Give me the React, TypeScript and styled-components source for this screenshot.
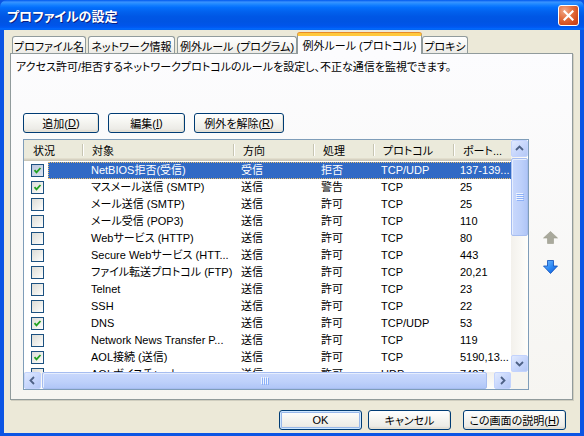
import React from 'react';
import styled, { createGlobalStyle, css } from 'styled-components';

const GlobalStyle = createGlobalStyle`
  * { box-sizing: border-box; }
  html, body {
    margin: 0;
    padding: 0;
    width: 584px;
    height: 436px;
    overflow: hidden;
    background: #ECE9D8;
  }
  body {
    font-family: "Liberation Sans", "Noto Sans CJK JP", sans-serif;
    font-size: 11px;
    color: #000;
    font-feature-settings: "palt";
  }
`;

type Rule = {
  on: boolean;
  name: string;
  dir: string;
  action: string;
  proto: string;
  port: string;
};

const rules: Rule[] = [
  { on: true, name: 'NetBIOS拒否(受信)', dir: '受信', action: '拒否', proto: 'TCP/UDP', port: '137-139...' },
  { on: true, name: 'マスメール送信 (SMTP)', dir: '送信', action: '警告', proto: 'TCP', port: '25' },
  { on: false, name: 'メール送信 (SMTP)', dir: '送信', action: '許可', proto: 'TCP', port: '25' },
  { on: false, name: 'メール受信 (POP3)', dir: '送信', action: '許可', proto: 'TCP', port: '110' },
  { on: false, name: 'Webサービス (HTTP)', dir: '送信', action: '許可', proto: 'TCP', port: '80' },
  { on: false, name: 'Secure Webサービス (HTT...', dir: '送信', action: '許可', proto: 'TCP', port: '443' },
  { on: false, name: 'ファイル転送プロトコル (FTP)', dir: '送信', action: '許可', proto: 'TCP', port: '20,21' },
  { on: false, name: 'Telnet', dir: '送信', action: '許可', proto: 'TCP', port: '23' },
  { on: false, name: 'SSH', dir: '送信', action: '許可', proto: 'TCP', port: '22' },
  { on: true, name: 'DNS', dir: '送信', action: '許可', proto: 'TCP/UDP', port: '53' },
  { on: false, name: 'Network News Transfer P...', dir: '送信', action: '許可', proto: 'TCP', port: '119' },
  { on: true, name: 'AOL接続 (送信)', dir: '送信', action: '許可', proto: 'TCP', port: '5190,13...' },
  { on: false, name: 'AOLボイスチャット', dir: '送信', action: '許可', proto: 'UDP', port: '7427' },
];

const columns = [
  { label: '状況', width: 59 },
  { label: '対象', width: 151 },
  { label: '方向', width: 80 },
  { label: '処理', width: 60 },
  { label: 'プロトコル', width: 80 },
  { label: 'ポート...', width: 80 },
];

const tabs = [
  { label: 'プロファイル名', width: 74 },
  { label: 'ネットワーク情報', width: 87 },
  { label: '例外ルール (プログラム)', width: 120 },
  { label: '例外ルール (プロトコル)', width: 125, active: true },
  { label: 'プロキシ', width: 46 },
];

const Window = styled.div`
  width: 584px;
  height: 436px;
  display: flex;
  flex-direction: column;
  background: #0A54E2;
`;

const TitleBar = styled.div`
  flex: none;
  height: 30px;
  display: flex;
  align-items: center;
  justify-content: space-between;
  padding: 0 5px 0 7px;
  border-radius: 7px 7px 0 0;
  background: linear-gradient(
    to bottom,
    #0058EE 0%,
    #3A93FF 7%,
    #288EFF 11%,
    #127DFF 18%,
    #036FFC 25%,
    #0262EE 38%,
    #0057E5 55%,
    #0054E3 72%,
    #0055EB 86%,
    #005BF5 92%,
    #026AFE 96%,
    #0062EF 100%
  );
`;

const TitleText = styled.span`
  font-family: "Noto Sans CJK JP", sans-serif;
  font-size: 13px;
  font-weight: bold;
  color: #fff;
  text-shadow: 1px 1px 0 #0A1E80;
`;

const CloseButton = styled.div`
  width: 21px;
  height: 21px;
  border: 1px solid #fff;
  border-radius: 3px;
  display: flex;
  align-items: center;
  justify-content: center;
  background: radial-gradient(circle at 30% 25%, #F2A989 0%, #E3703F 40%, #D24B1E 75%, #C0391A 100%);
`;

const Body = styled.div`
  flex: 1;
  display: flex;
  flex-direction: column;
  background: #ECE9D8;
  border-style: solid;
  border-color: #0B55E4;
  border-width: 0 4px 3px;
  padding: 3px 7px 0 6px;
`;

const TabRow = styled.div`
  flex: none;
  height: 20px;
  display: flex;
  align-items: flex-end;
  gap: 2px;
  padding-left: 2px;
`;

const Tab = styled.div<{ $w: number; $active?: boolean }>`
  flex: none;
  width: ${({ $w }) => $w}px;
  height: 17px;
  display: flex;
  align-items: center;
  justify-content: center;
  white-space: nowrap;
  border: 1px solid #919B9C;
  border-bottom: none;
  border-radius: 3px 3px 0 0;
  background: linear-gradient(to bottom, #FFFFFF 0%, #F7F7F4 50%, #ECEBE6 100%);
  padding-top: 1px;

  ${({ $active }) =>
    $active &&
    css`
      position: relative;
      z-index: 1;
      height: 21px;
      margin: 0 -2px -1px;
      padding-top: 0;
      border-top: 3px solid #FFC83C;
      box-shadow: 0 -1px 0 #E68B2C;
      background: #FCFCFE;
    `}
`;

const Panel = styled.div`
  flex: none;
  height: 347px;
  display: flex;
  flex-direction: column;
  border: 1px solid #919B9C;
  box-shadow: 1px 1px 0 #D0CEBF;
  background: linear-gradient(to bottom, #FCFCFE 0%, #F6F5F1 100%);
  padding: 5px 0 9px 0;
`;

const Description = styled.div`
  padding-left: 5px;
  line-height: 16px;
  white-space: nowrap;
`;

const ButtonRow = styled.div`
  display: flex;
  gap: 9px;
  margin-top: 38px;
  padding-left: 12px;
`;

const Button = styled.div<{ $w: number; $default?: boolean }>`
  flex: none;
  width: ${({ $w }) => $w}px;
  height: 20px;
  display: flex;
  align-items: center;
  justify-content: center;
  white-space: nowrap;
  border: 1px solid #003C74;
  border-radius: 3px;
  background: linear-gradient(to bottom, #FFFFFF 0%, #F6F6F2 40%, #ECEBE6 85%, #D6D0C5 100%);
  box-shadow: inset -1px -1px 0 #E3E0D5;

  ${({ $default }) =>
    $default &&
    css`
      box-shadow: inset 0 0 0 1px #CEE7FF, inset 0 0 0 2px #98B8EA;
    `}
`;

const ListArea = styled.div`
  flex: 1;
  display: flex;
  margin-top: 6px;
  padding-left: 12px;
  min-height: 0;
`;

const ListView = styled.div`
  flex: none;
  width: 506px;
  display: grid;
  grid-template-columns: 1fr 17px;
  grid-template-rows: 1fr 17px;
  border: 1px solid #7F9DB9;
  background: #fff;
  overflow: hidden;
`;

const ListContent = styled.div`
  overflow: hidden;
  min-width: 0;
  min-height: 0;
`;

const HeaderRow = styled.div`
  display: flex;
  height: 21px;
  background: #EBEADB;
  box-shadow: inset 0 -1px 0 #CBC7B8, inset 0 -2px 0 #D6D2C2, inset 0 -3px 0 #E2DECD;
`;

const HeaderCell = styled.div<{ $w: number }>`
  flex: none;
  position: relative;
  width: ${({ $w }) => $w}px;
  padding: 0 0 2px 9px;
  display: flex;
  align-items: center;
  white-space: nowrap;

  &::after {
    content: '';
    position: absolute;
    right: 0;
    top: 4px;
    bottom: 5px;
    width: 1px;
    background: #C7C5B2;
    box-shadow: 1px 0 0 #fff;
  }
`;

const Rows = styled.div`
  padding-top: 1px;
`;

const Row = styled.div`
  display: flex;
  height: 17px;
`;

const CheckSlot = styled.div`
  flex: none;
  width: 24px;
  display: flex;
  align-items: center;
  padding-left: 7px;
`;

const Check = styled.div<{ $sel?: boolean }>`
  width: 13px;
  height: 13px;
  border: 1px solid #1C5180;
  display: flex;
  align-items: center;
  justify-content: center;
  background: ${({ $sel }) =>
    $sel
      ? 'linear-gradient(135deg, #B9C6DE 0%, #DCE3F0 100%)'
      : 'linear-gradient(135deg, #DCDCD7 0%, #F0F0EC 60%, #FFFFFF 100%)'};
`;

const RowBand = styled.div<{ $sel?: boolean }>`
  flex: 1;
  display: flex;
  align-items: center;
  line-height: 17px;
  white-space: nowrap;
  ${({ $sel }) =>
    $sel &&
    css`
      background: #316AC5;
      color: #fff;
      outline: 1px dotted #E8C070;
      outline-offset: -1px;
    `}
`;

const Cell = styled.div<{ $w: number; $pad?: number }>`
  flex: none;
  width: ${({ $w }) => $w}px;
  padding-left: ${({ $pad }) => $pad ?? 7}px;
  overflow: hidden;
  white-space: nowrap;
`;

const VScroll = styled.div`
  display: flex;
  flex-direction: column;
  background: linear-gradient(to right, #F3F1EC 0%, #FEFEFB 100%);
`;

const HScroll = styled.div`
  display: flex;
  background: linear-gradient(to bottom, #F3F1EC 0%, #FEFEFB 100%);
`;

const Corner = styled.div`
  background: #F5F4EF;
`;

const ScrollButton = styled.div`
  flex: none;
  width: 17px;
  height: 17px;
  display: flex;
  align-items: center;
  justify-content: center;
  border: 1px solid #C3D3FD;
  border-radius: 2px;
  background: linear-gradient(135deg, #E1EAFE 0%, #C8D7FC 50%, #B4C8F6 100%);
`;

const Track = styled.div<{ $dir: 'v' | 'h' }>`
  flex: 1;
  display: flex;
  flex-direction: ${({ $dir }) => ($dir === 'v' ? 'column' : 'row')};
`;

const Thumb = styled.div<{ $dir: 'v' | 'h'; $size: number }>`
  flex: none;
  display: flex;
  align-items: center;
  justify-content: center;
  border: 1px solid #A6BDF0;
  border-radius: 2px;
  box-shadow: inset 1px 1px 0 #E6EEFE;
  ${({ $dir, $size }) =>
    $dir === 'v'
      ? css`
          width: 17px;
          height: ${$size}px;
          margin-top: 1px;
          background: linear-gradient(to right, #C9D8FC 0%, #BDD0FA 60%, #B0C6F7 100%);
        `
      : css`
          height: 17px;
          width: ${$size}px;
          margin-left: 1px;
          background: linear-gradient(to bottom, #C9D8FC 0%, #BDD0FA 60%, #B0C6F7 100%);
        `}
`;

const OrderColumn = styled.div`
  flex: 1;
  display: flex;
  flex-direction: column;
  align-items: center;
  gap: 14px;
  padding-top: 90px;
`;

const OrderButton = styled.div`
  width: 18px;
  height: 16px;
  display: flex;
  align-items: center;
  justify-content: center;
`;

const Footer = styled.div`
  flex: none;
  display: flex;
  justify-content: flex-end;
  padding: 10px 7px 0 0;
`;

const FooterButton = styled(Button)<{ $gap: number }>`
  margin-left: ${({ $gap }) => $gap}px;
`;

const Chevron = ({ dir }: { dir: 'up' | 'down' | 'left' | 'right' }) => {
  const pts = {
    up: '1,6 4.5,2.5 8,6',
    down: '1,3 4.5,6.5 8,3',
    left: '6,1 2.5,4.5 6,8',
    right: '3,1 6.5,4.5 3,8',
  }[dir];
  return (
    <svg width="9" height="9" viewBox="0 0 9 9">
      <polyline points={pts} fill="none" stroke="#4D6185" strokeWidth="1.8" />
    </svg>
  );
};

const Grip = ({ dir }: { dir: 'v' | 'h' }) =>
  dir === 'v' ? (
    <svg width="8" height="8" viewBox="0 0 8 8">
      {[0, 2, 4, 6].map((y) => (
        <g key={y}>
          <rect x="0" y={y} width="7" height="1" fill="#EEF4FE" />
          <rect x="1" y={y + 1} width="7" height="1" fill="#8CB0F8" />
        </g>
      ))}
    </svg>
  ) : (
    <svg width="8" height="8" viewBox="0 0 8 8">
      {[0, 2, 4, 6].map((x) => (
        <g key={x}>
          <rect x={x} y="0" width="1" height="7" fill="#EEF4FE" />
          <rect x={x + 1} y="1" width="1" height="7" fill="#8CB0F8" />
        </g>
      ))}
    </svg>
  );

const CheckMark = () => (
  <svg width="9" height="9" viewBox="0 0 9 9">
    <polyline points="1.5,4.2 3.5,6.4 7.5,2" fill="none" stroke="#21A121" strokeWidth="1.8" />
  </svg>
);

export default function App() {
  return (
    <>
      <GlobalStyle />
      <Window>
        <TitleBar>
          <TitleText>プロファイルの設定</TitleText>
          <CloseButton>
            <svg width="11" height="11" viewBox="0 0 11 11">
              <path d="M1.5 1.5 L9.5 9.5 M9.5 1.5 L1.5 9.5" stroke="#fff" strokeWidth="2.2" strokeLinecap="square" />
            </svg>
          </CloseButton>
        </TitleBar>
        <Body>
          <TabRow>
            {tabs.map((t) => (
              <Tab key={t.label} $w={t.width} $active={t.active}>
                {t.label}
              </Tab>
            ))}
          </TabRow>
          <Panel>
            <Description>アクセス許可/拒否するネットワークプロトコルのルールを設定し、不正な通信を監視できます。</Description>
            <ButtonRow>
              <Button $w={76}>
                追加(<u>D</u>)
              </Button>
              <Button $w={77}>
                編集(<u>I</u>)
              </Button>
              <Button $w={90}>
                例外を解除(<u>R</u>)
              </Button>
            </ButtonRow>
            <ListArea>
              <ListView>
                <ListContent>
                  <HeaderRow>
                    {columns.map((c) => (
                      <HeaderCell key={c.label} $w={c.width}>
                        {c.label}
                      </HeaderCell>
                    ))}
                  </HeaderRow>
                  <Rows>
                    {rules.map((r, i) => {
                      const sel = i === 0;
                      return (
                        <Row key={r.name}>
                          <CheckSlot>
                            <Check $sel={sel}>{r.on && <CheckMark />}</Check>
                          </CheckSlot>
                          <RowBand $sel={sel}>
                            <Cell $w={columns[0].width - 24} />
                            <Cell $w={columns[1].width} $pad={8}>
                              {r.name}
                            </Cell>
                            <Cell $w={columns[2].width}>{r.dir}</Cell>
                            <Cell $w={columns[3].width}>{r.action}</Cell>
                            <Cell $w={columns[4].width}>{r.proto}</Cell>
                            <Cell $w={columns[5].width} $pad={6}>
                              {r.port}
                            </Cell>
                          </RowBand>
                        </Row>
                      );
                    })}
                  </Rows>
                </ListContent>
                <VScroll>
                  <ScrollButton>
                    <Chevron dir="up" />
                  </ScrollButton>
                  <Track $dir="v">
                    <Thumb $dir="v" $size={78}>
                      <Grip dir="v" />
                    </Thumb>
                  </Track>
                  <ScrollButton>
                    <Chevron dir="down" />
                  </ScrollButton>
                </VScroll>
                <HScroll>
                  <ScrollButton>
                    <Chevron dir="left" />
                  </ScrollButton>
                  <Track $dir="h">
                    <Thumb $dir="h" $size={445}>
                      <Grip dir="h" />
                    </Thumb>
                  </Track>
                  <ScrollButton>
                    <Chevron dir="right" />
                  </ScrollButton>
                </HScroll>
                <Corner />
              </ListView>
              <OrderColumn>
                <OrderButton>
                  <svg width="15" height="13" viewBox="0 0 15 13">
                    <polygon points="7.5,0.5 14.5,7 10.5,7 10.5,12.5 4.5,12.5 4.5,7 0.5,7" fill="#A9A99C" stroke="#9A9A8C" strokeWidth="0.6" />
                  </svg>
                </OrderButton>
                <OrderButton>
                  <svg width="15" height="14" viewBox="0 0 15 14">
                    <defs>
                      <linearGradient id="down" x1="0" y1="0" x2="1" y2="1">
                        <stop offset="0" stopColor="#7CC0FF" />
                        <stop offset="0.5" stopColor="#2F8BF5" />
                        <stop offset="1" stopColor="#0A58D8" />
                      </linearGradient>
                    </defs>
                    <polygon points="4.5,0.5 10.5,0.5 10.5,6 14.5,6 7.5,13.5 0.5,6 4.5,6" fill="url(#down)" stroke="#0B4BB8" strokeWidth="0.8" />
                  </svg>
                </OrderButton>
              </OrderColumn>
            </ListArea>
          </Panel>
          <Footer>
            <FooterButton $w={83} $gap={0} $default>
              OK
            </FooterButton>
            <FooterButton $w={83} $gap={6}>
              キャンセル
            </FooterButton>
            <FooterButton $w={103} $gap={12}>
              この画面の説明(<u>H</u>)
            </FooterButton>
          </Footer>
        </Body>
      </Window>
    </>
  );
}
